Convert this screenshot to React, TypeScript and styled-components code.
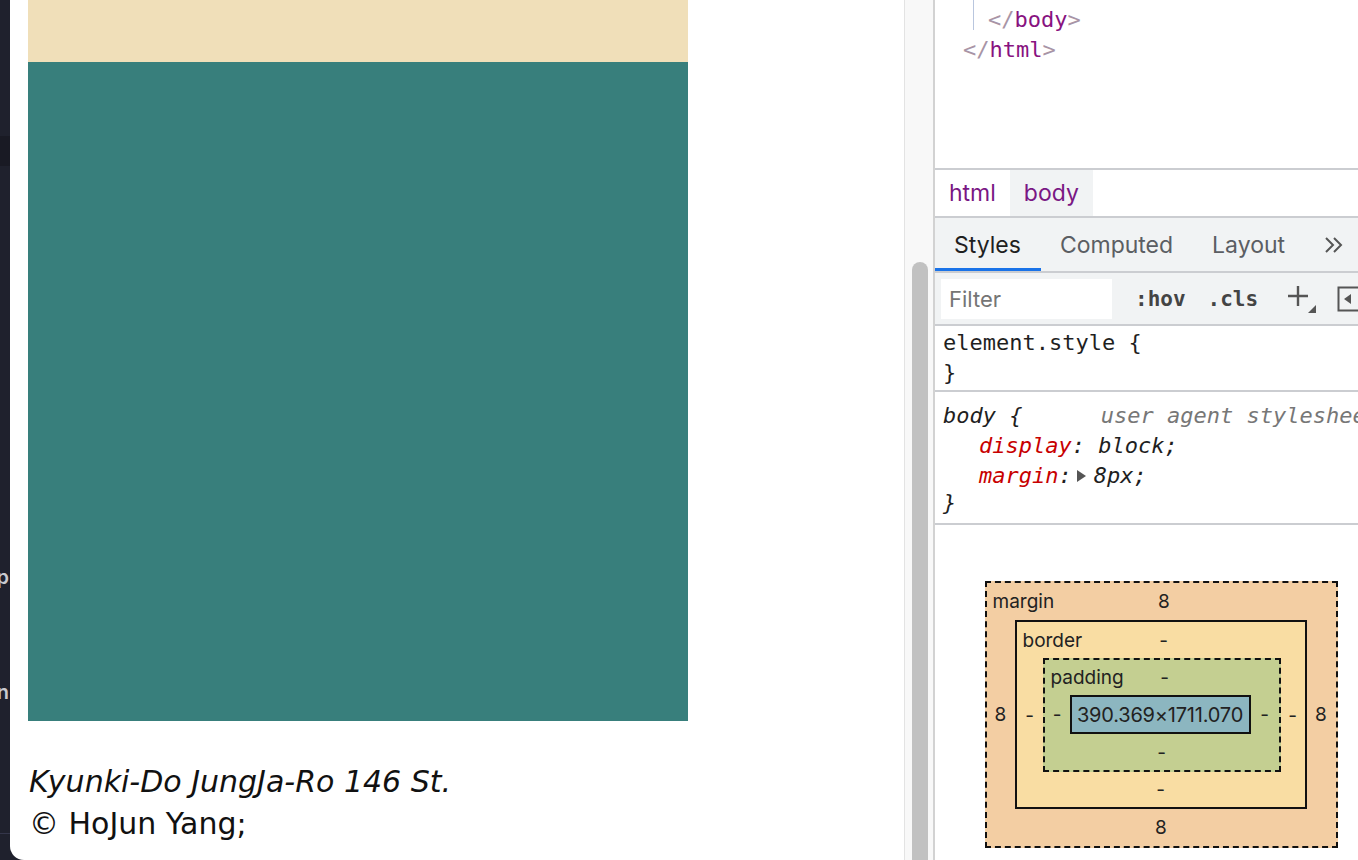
import * as React from 'react';
import styled, { createGlobalStyle } from 'styled-components';

const GlobalStyle = createGlobalStyle`
  html, body {
    margin: 0;
    padding: 0;
    background: #1f212d;
  }
  * { box-sizing: border-box; }
`;

const Shell = styled.div`
  display: flex;
  width: 1358px;
  height: 860px;
  overflow: hidden;
  background: #1f212d;
`;

const SideStrip = styled.div`
  flex: 0 0 10px;
  display: flex;
  flex-direction: column;
  overflow: hidden;
`;

const StripGap = styled.div<{ h: number }>`
  flex: 0 0 ${p => p.h}px;
`;

const StripBand = styled.div`
  flex: 0 0 30px;
  background: #191a24;
`;

const StripItem = styled.div`
  flex: 0 0 30px;
  display: flex;
  justify-content: flex-end;
  align-items: center;
  padding-right: 1px;
  white-space: nowrap;
  color: #c9cad0;
  font: 600 20px 'Inter', sans-serif;
`;

const StripRule = styled.div`
  flex: 0 0 1px;
  background: #34364a;
`;

const Page = styled.div`
  flex: 0 0 894px;
  background: #fff;
  border-bottom-left-radius: 14px;
  padding-left: 18px;
  display: flex;
  flex-direction: column;
`;

const Block = styled.div<{ h: number; bg: string }>`
  width: 660px;
  height: ${p => p.h}px;
  background: ${p => p.bg};
  flex-shrink: 0;
`;

const Footer = styled.footer`
  margin-top: 40px;
  padding-left: 1px;
  font-family: 'DejaVu Sans', 'Noto Sans CJK KR', sans-serif;
  font-size: 30px;
  line-height: 42px;
  color: #111;
`;

const Address = styled.div`
  font-style: italic;
`;

const ScrollTrack = styled.div`
  flex: 0 0 31px;
  background: #f8f8f8;
  border-left: 1px solid #e3e3e3;
  border-right: 2px solid #d2d2d2;
  padding: 262px 0 0 7px;
`;

const ScrollThumb = styled.div`
  width: 16px;
  height: 620px;
  border-radius: 8px;
  background: #c1c1c1;
`;

const DevTools = styled.div`
  flex: 0 0 452px;
  background: #fff;
  display: flex;
  flex-direction: column;
`;

const ElementsPane = styled.div`
  height: 168px;
  flex-shrink: 0;
  padding: 5px 0 0 28px;
  font: 22px/30px 'DejaVu Sans Mono', monospace;
`;

const TreeLine = styled.div`
  height: 30px;
  white-space: pre;
`;

const GuideLine = styled.span`
  display: inline-block;
  width: 1px;
  height: 30px;
  margin: -5px 14px 0 10px;
  vertical-align: top;
  background: #b9c6de;
`;

const Bracket = styled.span`
  color: #a894a6;
`;

const TagName = styled.span`
  color: #881280;
`;

const Divider = styled.div`
  height: 2px;
  flex-shrink: 0;
  background: #cbcdd1;
`;

const Crumbs = styled.div`
  height: 46px;
  flex-shrink: 0;
  display: flex;
`;

const Crumb = styled.div<{ selected?: boolean }>`
  display: flex;
  align-items: center;
  padding: 0 14px 0 14px;
  background: ${p => (p.selected ? '#f1f3f4' : 'transparent')};
  color: #7a1784;
  font: 23px 'Inter', sans-serif;
`;

const TabBar = styled.div`
  height: 53px;
  flex-shrink: 0;
  display: flex;
  background: #f1f3f4;
`;

const Tab = styled.div<{ active?: boolean }>`
  display: flex;
  align-items: center;
  padding: 3px 20px 0 19px;
  font: 23px 'Inter', sans-serif;
  color: ${p => (p.active ? '#1f1f1f' : '#5b5e63')};
  border-bottom: 3px solid ${p => (p.active ? '#1a73e8' : 'transparent')};
`;

const Toolbar = styled.div`
  height: 51px;
  flex-shrink: 0;
  display: flex;
  align-items: center;
  background: #f1f3f4;
  padding-left: 6px;
`;

const FilterBox = styled.div`
  width: 171px;
  height: 40px;
  background: #fff;
  display: flex;
  align-items: center;
  padding-left: 8px;
  color: #757575;
  font: 22px 'Inter', sans-serif;
`;

const ToolText = styled.span<{ gap: number }>`
  margin-left: ${p => p.gap}px;
  font: bold 21px 'DejaVu Sans Mono', monospace;
  color: #444;
`;

const ToolIcon = styled.span<{ gap: number }>`
  margin-left: ${p => p.gap}px;
  display: flex;
  align-items: center;
`;

const Rule = styled.div<{ padTop: number; padBottom: number }>`
  padding: ${p => p.padTop}px 8px ${p => p.padBottom}px 8px;
  font: 22px 'DejaVu Sans Mono', monospace;
  color: #1f1f1f;
`;

const RuleLine = styled.div<{ lh: number; indent?: number }>`
  display: flex;
  line-height: ${p => p.lh}px;
  padding-left: ${p => p.indent ?? 0}px;
  white-space: pre;
  align-items: center;
`;

const Italic = styled.span`
  font-style: italic;
`;

const Origin = styled.span`
  margin-left: auto;
  font-style: italic;
  color: #777;
`;

const PropName = styled.span`
  font-style: italic;
  color: #c80000;
`;

const Expander = styled.span`
  display: inline-block;
  width: 0;
  height: 0;
  margin: 0 8px 0 5px;
  border-top: 6px solid transparent;
  border-bottom: 6px solid transparent;
  border-left: 9px solid #555;
`;

const BoxArea = styled.div`
  display: flex;
  justify-content: center;
  padding-top: 56px;
`;

const Layer = styled.div<{ bg: string; dashed?: boolean; sides: [number, number, number, number] }>`
  display: grid;
  grid-template-columns: ${p => p.sides[3]}px auto ${p => p.sides[1]}px;
  grid-template-rows: ${p => p.sides[0]}px auto ${p => p.sides[2]}px;
  background: ${p => p.bg};
  border: 2px ${p => (p.dashed ? 'dashed' : 'solid')} #111;
  font: 19px 'Inter', sans-serif;
  color: #222;
`;

const LayerTop = styled.div`
  grid-column: 1 / 4;
  display: grid;
  grid-template-columns: 1fr auto 1fr;
  align-items: center;
  padding-left: 6px;
`;

const LayerTitle = styled.span`
  justify-self: start;
`;

const Cell = styled.div`
  display: flex;
  align-items: center;
  justify-content: center;
`;

const LayerBottom = styled(Cell)`
  grid-column: 1 / 4;
`;

const ContentBox = styled.div`
  width: 181px;
  height: 39px;
  border: 2px solid #111;
  background: #8cb6c0;
  display: flex;
  align-items: center;
  justify-content: center;
  font: 20px 'Inter', sans-serif;
  letter-spacing: -0.2px;
  color: #222;
`;

type LayerProps = {
  title: string;
  value: string;
  bg: string;
  dashed?: boolean;
  sides: [number, number, number, number];
  children: React.ReactNode;
};

const BoxLayer = ({ title, value, bg, dashed, sides, children }: LayerProps) => (
  <Layer bg={bg} dashed={dashed} sides={sides}>
    <LayerTop>
      <LayerTitle>{title}</LayerTitle>
      <span>{value}</span>
      <span />
    </LayerTop>
    <Cell>{value}</Cell>
    {children}
    <Cell>{value}</Cell>
    <LayerBottom>{value}</LayerBottom>
  </Layer>
);

const MoreIcon = () => (
  <svg width="20" height="18" viewBox="0 0 20 18">
    <path d="M2 2l7 7-7 7M10 2l7 7-7 7" stroke="#555" strokeWidth="2" fill="none" />
  </svg>
);

const PlusIcon = () => (
  <svg width="30" height="32" viewBox="0 0 30 32">
    <path d="M2 13h20M12 3v20" stroke="#555" strokeWidth="2.4" fill="none" />
    <path d="M30 30h-8l8-8z" fill="#555" />
  </svg>
);

const SidebarIcon = () => (
  <svg width="26" height="26" viewBox="0 0 26 26">
    <rect x="1.5" y="1.5" width="23" height="23" fill="none" stroke="#555" strokeWidth="2" />
    <path d="M14 8l-7 5 7 5z" fill="#555" />
  </svg>
);

export default function App() {
  return (
    <>
      <GlobalStyle />
      <Shell>
        <SideStrip>
          <StripGap h={136} />
          <StripBand />
          <StripGap h={396} />
          <StripItem>Setup</StripItem>
          <StripGap h={85} />
          <StripItem>Design</StripItem>
          <StripGap h={126} />
          <StripRule />
        </SideStrip>

        <Page>
          <Block h={62} bg="#f0dfb9" />
          <Block h={659} bg="#387f7c" />
          <Footer>
            <Address>Kyunki-Do JungJa-Ro 146 St.</Address>
            <div>© HoJun Yang;</div>
          </Footer>
        </Page>

        <ScrollTrack>
          <ScrollThumb />
        </ScrollTrack>

        <DevTools>
          <ElementsPane>
            <TreeLine>
              <GuideLine />
              <Bracket>&lt;/</Bracket>
              <TagName>body</TagName>
              <Bracket>&gt;</Bracket>
            </TreeLine>
            <TreeLine>
              <Bracket>&lt;/</Bracket>
              <TagName>html</TagName>
              <Bracket>&gt;</Bracket>
            </TreeLine>
          </ElementsPane>
          <Divider />
          <Crumbs>
            <Crumb>html</Crumb>
            <Crumb selected>body</Crumb>
          </Crumbs>
          <Divider />
          <TabBar>
            <Tab active>Styles</Tab>
            <Tab>Computed</Tab>
            <Tab>Layout</Tab>
            <Tab>
              <MoreIcon />
            </Tab>
          </TabBar>
          <Divider />
          <Toolbar>
            <FilterBox>Filter</FilterBox>
            <ToolText gap={23}>:hov</ToolText>
            <ToolText gap={22}>.cls</ToolText>
            <ToolIcon gap={28}>
              <PlusIcon />
            </ToolIcon>
            <ToolIcon gap={21}>
              <SidebarIcon />
            </ToolIcon>
          </Toolbar>
          <Divider />
          <Rule padTop={1} padBottom={2}>
            <RuleLine lh={31}>element.style {'{'}</RuleLine>
            <RuleLine lh={30}>{'}'}</RuleLine>
          </Rule>
          <Divider />
          <Rule padTop={9} padBottom={6}>
            <RuleLine lh={29}>
              <Italic>body {'{'}</Italic>
              <Origin>user agent stylesheet</Origin>
            </RuleLine>
            <RuleLine lh={32} indent={36}>
              <PropName>display</PropName>
              <Italic>: block;</Italic>
            </RuleLine>
            <RuleLine lh={27} indent={36}>
              <PropName>margin</PropName>
              <Italic>:</Italic>
              <Expander />
              <Italic>8px;</Italic>
            </RuleLine>
            <RuleLine lh={28}>
              <Italic>{'}'}</Italic>
            </RuleLine>
          </Rule>
          <Divider />
          <BoxArea>
            <BoxLayer title="margin" value="8" bg="#f3cea3" dashed sides={[37, 29, 37, 28]}>
              <BoxLayer title="border" value="-" bg="#f9dda3" sides={[36, 24, 35, 26]}>
                <BoxLayer title="padding" value="-" bg="#c4cf91" dashed sides={[35, 28, 36, 25]}>
                  <ContentBox>390.369×1711.070</ContentBox>
                </BoxLayer>
              </BoxLayer>
            </BoxLayer>
          </BoxArea>
        </DevTools>
      </Shell>
    </>
  );
}
